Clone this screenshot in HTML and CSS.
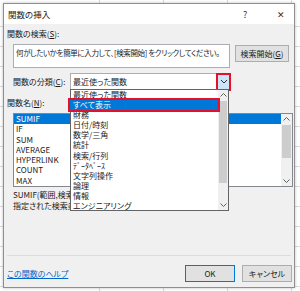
FILE: index.html
```html
<!DOCTYPE html>
<html lang="ja">
<head>
  <meta charset="UTF-8">
  <meta name="viewport" content="width=device-width, initial-scale=1.0">
  <link rel="stylesheet" href="styles.css">
</head>
<body>
  <div class="dialog">
    <div class="titlebar">
      <span class="title">関数の挿入</span>
      <span class="help">?</span>
      <span class="close">&#x2715;</span>
    </div>
    <div class="content">
      <div class="label">関数の検索(<u>S</u>):</div>
      <div class="search-row">
        <div class="textbox">何がしたいかを簡単に入力して、[検索開始] をクリックしてください。</div>
        <div class="button search-btn">検索開始(<u>G</u>)</div>
      </div>
      <div class="category-row">
        <span class="label-inline">関数の分類(<u>C</u>):</span>
        <div class="combo">
          <span>最近使った関数</span>
          <div class="combo-arrow">
            <svg width="8" height="5" viewBox="0 0 8 5"><path d="M1 1 L4 4 L7 1" fill="none" stroke="#333" stroke-width="1"/></svg>
          </div>
        </div>
      </div>
      <div class="label name-label">関数名(<u>N</u>):</div>
      <div class="listbox">
        <div class="list-items">
          <div class="item selected">SUMIF</div>
          <div class="item">IF</div>
          <div class="item">SUM</div>
          <div class="item">AVERAGE</div>
          <div class="item">HYPERLINK</div>
          <div class="item">COUNT</div>
          <div class="item">MAX</div>
        </div>
        <div class="scrollbar">
          <svg width="7" height="4" viewBox="0 0 7 4"><path d="M0.5 3.5 L3.5 0.5 L6.5 3.5" fill="none" stroke="#606060" stroke-width="1"/></svg>
          <div class="thumb list-thumb"></div>
          <div class="track"></div>
          <svg width="7" height="4" viewBox="0 0 7 4"><path d="M0.5 0.5 L3.5 3.5 L6.5 0.5" fill="none" stroke="#606060" stroke-width="1"/></svg>
        </div>
      </div>
      <!-- the open dropdown covers the rest of these two lines -->
      <div class="syntax">SUMIF(範囲,検索条件,合計範囲)</div>
      <div class="desc">指定された検索条件に一致するセルの値を合計します。</div>
      <div class="spacer"></div>
      <div class="separator"></div>
      <div class="footer">
        <a class="help-link" href="#">この関数のヘルプ</a>
        <div class="button ok-btn">OK</div>
        <div class="button">キャンセル</div>
      </div>
    </div>

    <!-- open category dropdown -->
    <div class="dropdown">
      <div class="drop-items">
        <div class="drop-item">最近使った関数</div>
        <div class="drop-item active">すべて表示</div>
        <div class="drop-item">財務</div>
        <div class="drop-item">日付/時刻</div>
        <div class="drop-item">数学/三角</div>
        <div class="drop-item">統計</div>
        <div class="drop-item">検索/行列</div>
        <div class="drop-item">ﾃﾞｰﾀﾍﾞｰｽ</div>
        <div class="drop-item">文字列操作</div>
        <div class="drop-item">論理</div>
        <div class="drop-item">情報</div>
        <div class="drop-item">エンジニアリング</div>
      </div>
      <div class="scrollbar drop-scroll">
        <svg width="7" height="4" viewBox="0 0 7 4"><path d="M0.5 3.5 L3.5 0.5 L6.5 3.5" fill="none" stroke="#606060" stroke-width="1"/></svg>
        <div class="thumb drop-thumb"></div>
        <div class="track"></div>
        <svg width="7" height="4" viewBox="0 0 7 4"><path d="M0.5 0.5 L3.5 3.5 L6.5 0.5" fill="none" stroke="#606060" stroke-width="1"/></svg>
      </div>
    </div>
  </div>
</body>
</html>
```

FILE: styles.css
```css
* {
  margin: 0;
  padding: 0;
  box-sizing: border-box;
}

body {
  width: 300px;
  height: 291px;
  overflow: hidden;
  background-color: #fff;
  background-image:
    repeating-linear-gradient(to right, transparent 0, transparent 63px, #dadada 63px, #dadada 64px),
    repeating-linear-gradient(to bottom, transparent 0, transparent 19px, #dadada 19px, #dadada 20px);
  background-position: 36px 7px;
  font-family: "Noto Sans CJK JP", "Noto Sans", sans-serif;
  font-feature-settings: "palt";
  font-size: 8px;
  color: #1a1a1a;
  padding: 3px 0 0 3px;
}

.dialog {
  position: relative;
  width: 292px;
  height: 285px;
  border: 1px solid #8f8f8f;
  background: #f0f0f0;
  display: flex;
  flex-direction: column;
  box-shadow: 0 0 3px rgba(0, 0, 0, 0.25);
}

.titlebar {
  height: 20px;
  background: #fff;
  display: flex;
  align-items: center;
  padding-left: 4px;
  font-size: 8.5px;
}

.title {
  flex: 1;
}

.help {
  width: 10px;
  font-size: 9px;
  color: #333;
  margin-right: 24px;
}

.close {
  width: 10px;
  font-size: 9px;
  color: #333;
  margin-right: 7px;
}

.content {
  flex: 1;
  display: flex;
  flex-direction: column;
  padding: 5px 2px 5px 3px;
}

.label {
  line-height: 10px;
  height: 10px;
}

.search-row {
  display: flex;
  align-items: flex-start;
  margin-top: 5px;
  padding-left: 6px;
}

.textbox {
  width: 217px;
  height: 24px;
  background: #fff;
  border: 1px solid #abadb3;
  padding: 3px 2px;
  font-size: 7.5px;
  letter-spacing: -0.35px;
  line-height: 10px;
  white-space: nowrap;
  overflow: hidden;
}

.button {
  height: 17px;
  border: 1px solid #adadad;
  background: #e1e1e1;
  display: flex;
  align-items: center;
  justify-content: center;
  font-size: 8px;
}

.search-btn {
  width: 54px;
  margin-left: 5px;
  margin-top: 1px;
}

.category-row {
  display: flex;
  align-items: center;
  margin-top: 5px;
  padding-left: 6px;
}

.label-inline {
  width: 57px;
}

.combo {
  width: 161px;
  height: 17px;
  background: #fff;
  border: 1px solid #abadb3;
  display: flex;
  align-items: center;
  padding-left: 2px;
}

.combo span {
  flex: 1;
}

.combo-arrow {
  width: 15px;
  height: 18px;
  margin-right: -1px;
  background: #cce4f7;
  border: 2px solid #e5102a;
  display: flex;
  align-items: center;
  justify-content: center;
}

.name-label {
  margin-top: 8px;
}

.listbox {
  margin: 5px 0 0 6px;
  width: 280px;
  height: 74px;
  background: #fff;
  border: 1px solid #828790;
  display: flex;
}

.list-items {
  flex: 1;
}

.item {
  height: 10.3px;
  line-height: 10.3px;
  padding-left: 2px;
  font-size: 8px;
}

.item.selected {
  background: #0078d7;
  color: #fff;
}

.scrollbar {
  width: 11px;
  background: #f0f0f0;
  display: flex;
  flex-direction: column;
  align-items: center;
  padding: 3px 0;
}

.scrollbar svg {
  flex: none;
}

.thumb {
  width: 9px;
  background: #cdcdcd;
}

.list-thumb {
  height: 33px;
  margin-top: 4px;
}

.track {
  flex: 1;
}

.syntax,
.desc {
  margin-left: 6px;
  line-height: 10px;
  white-space: nowrap;
}

.syntax {
  margin-top: 3px;
}

.desc {
  margin-top: 1px;
}

.spacer {
  flex: 1;
}

.separator {
  height: 1px;
  background: #dcdcdc;
  margin: 0 1px 0 0;
}

.footer {
  display: flex;
  align-items: center;
  margin-top: 9px;
}

.help-link {
  flex: 1;
  color: #0066cc;
  font-size: 8px;
}

.ok-btn {
  width: 50px;
  border-color: #0078d7;
  margin-right: 7px;
}

.footer .button:last-child {
  width: 50px;
}

/* open dropdown list of the category combo */
.dropdown {
  position: absolute;
  left: 66px;
  top: 85px;
  width: 159px;
  height: 122px;
  background: #fff;
  border: 1px solid #646464;
  display: flex;
}

.drop-items {
  flex: 1;
}

.drop-item {
  height: 10.1px;
  line-height: 10.1px;
  padding-left: 2px;
  white-space: nowrap;
}

.drop-item.active {
  background: #0078d7;
  color: #fff;
  outline: 2px solid #e5102a;
  position: relative;
  left: -1px;
  padding-left: 3px;
  margin-right: -1px;
}

.drop-scroll {
  width: 10px;
}

.drop-thumb {
  height: 82px;
  margin-top: 4px;
  width: 8px;
}
```
